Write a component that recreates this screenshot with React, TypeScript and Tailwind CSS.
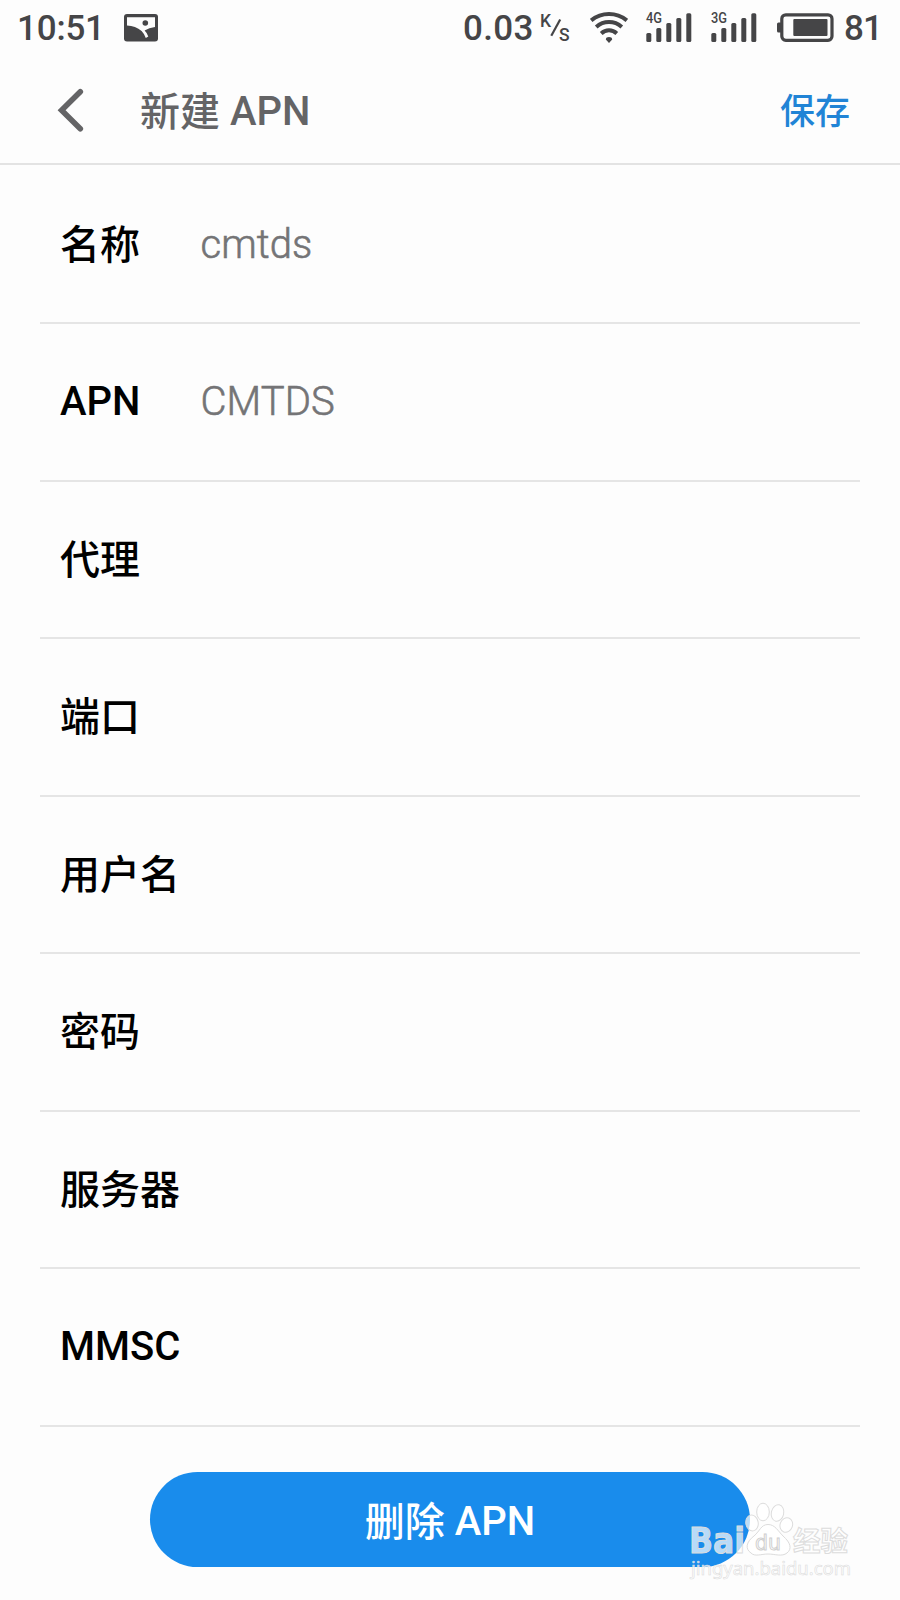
type Field = { label: string; value?: string };

const fields: Field[] = [
  { label: '名称', value: 'cmtds' },
  { label: 'APN', value: 'CMTDS' },
  { label: '代理' },
  { label: '端口' },
  { label: '用户名' },
  { label: '密码' },
  { label: '服务器' },
  { label: 'MMSC' },
];

function Signal({ label }: { label: string }) {
  return (
    <svg className="overflow-visible" width="46" height="32" viewBox="0 0 46 32" fill="#454547">
      <text x="0" y="10.3" fontSize="14" fontWeight="500" fill="#454547" textLength="16" lengthAdjust="spacingAndGlyphs">{label}</text>
      <rect x="0.3" y="20" width="5" height="9" rx="1.5" />
      <rect x="10.3" y="15" width="5" height="14" rx="1.5" />
      <rect x="20.3" y="10" width="5" height="19" rx="1.5" />
      <rect x="30.3" y="5" width="5" height="24" rx="1.5" />
      <rect x="40.3" y="0.3" width="5" height="28.7" rx="1.5" />
    </svg>
  );
}

function StatusBar() {
  return (
    <div className="flex h-[56px] items-start pt-[13px] pl-[17px] text-[35px] leading-[32px] font-medium text-[#454547]">
      <span className="w-[107px] tracking-[-0.2px]">10:51</span>
      <svg className="mt-px" width="34" height="28" viewBox="0 0 34 28">
        <rect x="0" y="0" width="34" height="27.5" rx="3" fill="#454547" />
        <path d="M3 3.2H31V13Q25 13.8 20.6 16.6Q23.4 19.4 24.3 22.6L21.8 24Q20.2 19.6 17.6 17Q11.5 11.6 3 11.4Z" fill="#fdfdfd" />
        <circle cx="21.3" cy="9" r="2.8" fill="#454547" />
      </svg>
      <span className="ml-[305px] w-[77px] tracking-[0.3px]">0.03</span>
      <svg className="mt-px overflow-visible" width="30" height="30" viewBox="0 0 30 30" fill="#454547">
        <text x="0" y="13" fontSize="17.5" fontWeight="500">K</text>
        <path d="M11.3 21.8L20.2 5.5" stroke="#454547" strokeWidth="2.2" />
        <text x="19" y="26.5" fontSize="17.5" fontWeight="500">S</text>
      </svg>
      <svg className="ml-[19.5px] -mt-[3px]" width="38" height="34" viewBox="0 0 38 34" fill="none" stroke="#454547" strokeWidth="4">
        <path d="M1.2 10.4Q9 4 19 4T36.8 10.4" />
        <path d="M6.2 17Q11.8 12.1 19 12.1T31.8 17" />
        <path d="M11.2 23.4Q14.6 20.3 19 20.3T26.8 23.4" />
        <path d="M19 33L15.8 29.4Q16.1 27 19 27T22.2 29.4Z" fill="#454547" stroke="none" />
      </svg>
      <div className="ml-[18.5px] flex gap-[19px]">
        <Signal label="4G" />
        <Signal label="3G" />
      </div>
      <svg className="ml-[20px]" width="57" height="29" viewBox="0 0 57 29">
        <rect x="0" y="9.5" width="5" height="10" rx="1.5" fill="#454547" />
        <rect x="4.8" y="1.8" width="50.2" height="25.5" rx="4" fill="none" stroke="#454547" strokeWidth="3.2" />
        <rect x="16.3" y="6" width="34.2" height="17" rx="1" fill="#454547" />
      </svg>
      <span className="ml-[10px] tracking-[-1px]">81</span>
    </div>
  );
}

function Watermark() {
  return (
    <svg className="absolute top-[1500px] left-[684px]" width="176" height="84" viewBox="0 0 176 84">
      <g fill="#fff" fillOpacity="0.7" stroke="#dcdcdc" strokeWidth="1">
        <text className="font-['DejaVu_Sans']" x="5" y="53" fontSize="35" fontWeight="700" textLength="56" lengthAdjust="spacingAndGlyphs">Bai</text>
        <ellipse cx="68" cy="23" rx="6.2" ry="8" transform="rotate(-10 68 23)" />
        <ellipse cx="79" cy="12" rx="6.3" ry="8.8" />
        <ellipse cx="93.5" cy="13" rx="6.2" ry="8.4" transform="rotate(12 93.5 13)" />
        <ellipse cx="102.3" cy="25" rx="6.2" ry="7.4" transform="rotate(20 102.3 25)" />
        <path d="M84 24.5C91 24.5 94 31 99 36C107 43 108 49 103 53C98 57 91 54 84 54C77 54 71 57 67 53C61 49 62 42 70 36C76 31 77 24.5 84 24.5Z" />
        <text className="font-['DejaVu_Sans']" x="71" y="50" fontSize="21" stroke="#cfcfcf" textLength="26" lengthAdjust="spacingAndGlyphs">du</text>
        <text x="109" y="51" fontSize="27.5" fontWeight="700">经验</text>
      </g>
      <text className="font-['Noto_Sans']" x="7" y="74.5" fontSize="18.5" fill="#fff" fillOpacity="0.75" stroke="#dadada" strokeWidth="0.55" textLength="160" lengthAdjust="spacingAndGlyphs">jingyan.baidu.com</text>
    </svg>
  );
}

export default function App() {
  return (
    <div className="relative flex h-[1600px] w-[900px] flex-col overflow-hidden bg-[#fdfdfd] font-['Roboto','Noto_Sans_CJK_SC',sans-serif]">
      <StatusBar />
      <header className="flex h-[109px] items-center border-b-2 border-[#e3e3e3] pr-[50px] pl-[57px] text-[#646466]">
        <svg width="28" height="44" viewBox="0 0 28 44" fill="none" stroke="#646466" strokeWidth="5.6" strokeLinecap="round" strokeLinejoin="miter">
          <path d="M23.3 3.8L4.6 22.3L23.3 40.8" />
        </svg>
        <h1 className="ml-[55px] pt-[4px] text-[40px] leading-[48px] font-medium">
          <span className="inline-block translate-y-px">新建</span> APN
        </h1>
        <button className="ml-auto pt-[7px] text-[35px] leading-[48px] font-medium text-[#2184d6]">保存</button>
      </header>
      <main className="mx-[40px] pt-[1.5px]">
        {fields.map(({ label, value }) => (
          <div key={label} className="flex h-[157.5px] items-center border-b-2 border-[#e5e5e5] pt-[1px] pl-[20px] text-[40px] leading-[48px]">
            <label className={/^[A-Z]/.test(label) ? 'min-w-[140px] font-medium text-black' : 'min-w-[140px] translate-y-px font-medium text-black'}>{label}</label>
            {value && <span className="pl-[0.5px] font-light tracking-[0.1px] text-[#747476] [-webkit-text-stroke:0.6px_#747476]">{value}</span>}
          </div>
        ))}
      </main>
      <button className="mx-auto mt-[45px] h-[95px] w-[600px] shrink-0 rounded-full bg-[#198cec] pt-[5px] text-[40px] leading-[48px] font-medium text-white">
        <span className="inline-block translate-y-px">删除</span> APN
      </button>
      <Watermark />
    </div>
  );
}
